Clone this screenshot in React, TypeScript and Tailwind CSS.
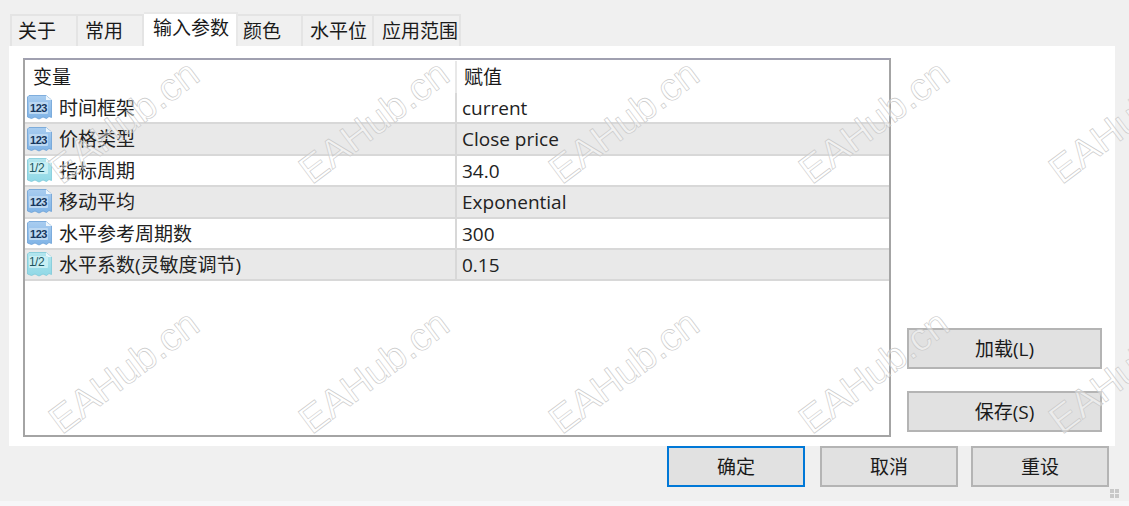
const font = { fontFamily: '"Open Sans", "Noto Sans CJK SC", sans-serif' }

const tabs = [
  { label: '关于', width: 'w-[68px] pl-[6px] border-l-2' },
  { label: '常用', width: 'w-[66px] pl-[7px]' },
  { label: '输入参数', width: 'w-[94px] pl-[9px]', active: true },
  { label: '颜色', width: 'w-[65px] pl-[5px]' },
  { label: '水平位', width: 'w-[71px] pl-[7px]' },
  { label: '应用范围', width: 'w-[87px] pl-[8px]' },
]

type Kind = 'int' | 'real'

const rows: { name: string; value: string; kind: Kind }[] = [
  { name: '时间框架', value: 'current', kind: 'int' },
  { name: '价格类型', value: 'Close price', kind: 'int' },
  { name: '指标周期', value: '34.0', kind: 'real' },
  { name: '移动平均', value: 'Exponential', kind: 'int' },
  { name: '水平参考周期数', value: '300', kind: 'int' },
  { name: '水平系数(灵敏度调节)', value: '0.15', kind: 'real' },
]

const marks = [
  [44, 66], [294, 66], [544, 66], [794, 66], [1044, 66],
  [44, 316], [294, 316], [544, 316], [794, 316], [1044, 316],
]

function TypeIcon({ kind }: { kind: Kind }) {
  const real = kind === 'real'
  const id = real ? 'icon-real' : 'icon-int'
  return (
    <svg width="27" height="27" viewBox="0 0 27 27" className="shrink-0">
      <defs>
        <linearGradient id={id} x1="0" y1="0" x2="0" y2="1">
          <stop offset="0" stopColor={real ? '#b4e6ee' : '#a9cdf0'} />
          <stop offset="1" stopColor={real ? '#8fd8e6' : '#7fb3e6'} />
        </linearGradient>
      </defs>
      <path
        d="M3 1.5H20L25.5 6V23.5L23 22.5L20.5 24.5L17 23L13 25L9 23L5.5 24.5L1.5 23V3Z"
        fill={`url(#${id})`}
        stroke={real ? '#7cc9d8' : '#6a9fd6'}
        strokeWidth="0.8"
      />
      <path d="M20 1.5V6H25.5Z" fill="#eef6fc" />
      <rect x="3" y={real ? 5 : 8} width="19" height="12" rx="1" fill={real ? '#c8eff4' : '#bcd8f2'} />
      <text
        x={real ? 10.5 : 12.5}
        y={real ? 15 : 17.5}
        textAnchor="middle"
        fontSize={real ? 12 : 11}
        fontWeight={real ? 400 : 700}
        letterSpacing="-0.5"
        fill={real ? '#1c5560' : '#16365c'}
        fontFamily='"Liberation Sans", sans-serif'
      >
        {real ? '1/2' : '123'}
      </text>
    </svg>
  )
}

function DlgButton({ label, focused, className }: { label: string; focused?: boolean; className: string }) {
  return (
    <button
      type="button"
      className={`h-[41px] border-2 bg-[#e1e1e1] pt-[1px] text-[19px] text-[#1a1a1a] ${
        focused ? 'border-[#0078d7]' : 'border-[#b4b4b4]'
      } ${className}`}
    >
      {label}
    </button>
  )
}

export default function App() {
  return (
    <div className="relative h-[506px] w-[1129px] overflow-hidden bg-[#f0f0f0]" style={font}>
      <div className="flex h-[46px] items-end pl-[10px]">
        {tabs.map((tab) => (
          <div
            key={tab.label}
            className={`flex items-center border-t-2 border-r-2 text-[19px] text-[#1a1a1a] ${tab.width} ${
              tab.active
                ? 'h-[34px] border-[#e8e8e8] bg-white pb-[3px]'
                : 'h-[32px] border-[#e4e4e4] bg-[#f0f0f0]'
            }`}
          >
            {tab.label}
          </div>
        ))}
      </div>

      <div className="ml-[9px] flex h-[400px] w-[1106px] bg-white pt-[12px] pl-[14px]">
        <div className="h-[379px] w-[868px] border-2 border-t-[#a0a0b0] border-r-[#a4a4a4] border-b-[#a4a4a4] border-l-[#a4a4a4] bg-white">
          <div className="flex h-[33px] pt-[1px] text-[19px] text-[#1a1a1a]">
            <div className="flex w-[430px] items-center pl-[8px]">变量</div>
            <div className="flex items-center border-l-2 border-[#e8e8e8] pl-[7px]">赋值</div>
          </div>
          {rows.map((row, i) => (
            <div
              key={row.name}
              className={`flex h-[31.4px] items-center border-b-2 border-[#d8d8d8] text-[19px] text-[#222] ${
                i % 2 === 1 ? 'bg-[#e9e9e9]' : 'bg-white'
              }`}
            >
              <div className="flex h-full w-[430px] items-center gap-[6px] pl-[1px]">
                <TypeIcon kind={row.kind} />
                <span className="pt-[1px]">{row.name}</span>
              </div>
              <div className="flex h-full items-center border-l-2 border-[#d8d8d8] pt-[1px] pl-[5px]">{row.value}</div>
            </div>
          ))}
        </div>

        <div className="ml-[16px] flex h-[374px] w-[195px] flex-col justify-end gap-[22px]">
          <DlgButton label="加载(L)" className="w-[195px]" />
          <DlgButton label="保存(S)" className="w-[195px]" />
        </div>
      </div>

      <div className="flex pl-[667px]">
        <DlgButton label="确定" focused className="w-[138px]" />
        <DlgButton label="取消" className="ml-[15px] w-[138px]" />
        <DlgButton label="重设" className="ml-[13px] w-[138px]" />
      </div>

      <div className="absolute top-[489px] left-[1110px] grid grid-cols-2 gap-[1px]">
        <span className="h-[4px] w-[4px] bg-[#c8c8c8]" />
        <span className="h-[4px] w-[4px] bg-[#c8c8c8]" />
        <span className="h-[4px] w-[4px] bg-[#c8c8c8]" />
        <span className="h-[4px] w-[4px] bg-[#c8c8c8]" />
      </div>
      <div className="absolute right-0 bottom-0 left-0 h-[5px] bg-[#f6f6f8]" />

      {marks.map(([x, y]) => (
        <span
          key={`${x}-${y}`}
          className="pointer-events-none absolute flex h-[112px] w-[160px] items-center justify-center text-[39px] whitespace-nowrap text-white/40 [-webkit-text-stroke:0.6px_#c8c8c8]"
          style={{ left: x, top: y, fontFamily: '"Liberation Sans", sans-serif', transform: 'rotate(-37deg)' }}
        >
          EAHub.cn
        </span>
      ))}
    </div>
  )
}
